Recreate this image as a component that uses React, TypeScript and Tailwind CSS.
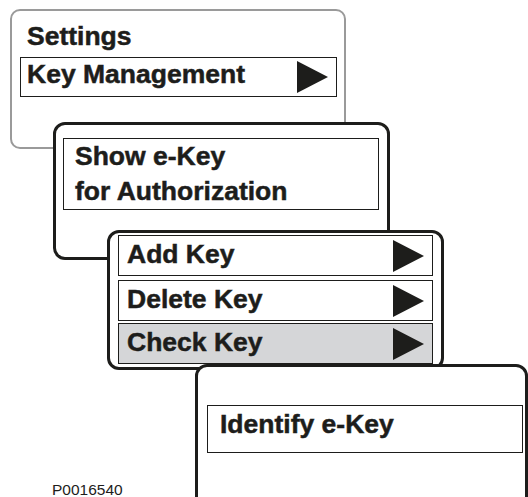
import React from "react";

const Tri = () => (
  <svg width="31" height="32" viewBox="0 0 31 32" className="shrink-0">
    <polygon points="0,0 31,16 0,32" fill="#1d1d1b" />
  </svg>
);

const font = { fontFamily: '"Liberation Sans", Arial, sans-serif' };

const bold = "text-[26.5px] font-bold leading-[30px] [-webkit-text-stroke:0.5px_#1d1d1b]";

function Row({ label, gray }: { label: string; gray?: boolean }) {
  return (
    <div
      className={`flex h-[41px] items-start justify-between border border-[#1d1d1b] pl-[8px] pr-[8px] ${
        gray ? "bg-[#d5d6d8]" : "bg-white"
      }`}
    >
      <span className={`pt-[3px] ${bold}`}>{label}</span>
      <div className="flex h-full items-center">
        <Tri />
      </div>
    </div>
  );
}

export default function App() {
  return (
    <div
      className="relative h-[497px] w-[528px] overflow-hidden bg-white text-[#1d1d1b]"
      style={font}
    >
      {/* Window 1 */}
      <div className="absolute left-[10px] top-[9px] h-[140px] w-[336px] rounded-[10px] border-[2.5px] border-[#9a9a9a] bg-white pl-[8px] pr-[7px] pt-[10px]">
        <div className={`pl-[7px] ${bold}`}>Settings</div>
        <div className="mt-[6px] flex h-[40px] items-start justify-between border border-[#1d1d1b] pl-[6px] pr-[8px]">
          <span className={`pt-[1px] ${bold}`}>Key Management</span>
          <div className="flex h-full items-center">
            <Tri />
          </div>
        </div>
      </div>

      {/* Window 2 */}
      <div className="absolute left-[53px] top-[122px] h-[138px] w-[337px] rounded-[12px] border-[3px] border-[#1d1d1b] bg-white pl-[7px] pr-[8px] pt-[13px]">
        <div className={`border border-[#1d1d1b] pl-[11px] ${bold} leading-[35px]`}>
          <div>Show e-Key</div>
          <div>for Authorization</div>
        </div>
      </div>

      {/* Window 3 */}
      <div className="absolute left-[107px] top-[230px] h-[140px] w-[337px] rounded-[12px] border-[3px] border-[#1d1d1b] bg-white pl-[8px] pr-[8px] pt-[2px]">
        <div className="flex flex-col">
          <Row label="Add Key" />
          <div className="mt-[4px]">
            <Row label="Delete Key" />
          </div>
          <div className="mt-[2px]">
            <Row label="Check Key" gray />
          </div>
        </div>
      </div>

      {/* Window 4 */}
      <div className="absolute left-[195px] top-[364px] h-[160px] w-[333px] rounded-[12px] border-[3px] border-[#1d1d1b] bg-white pl-[9px] pr-[2px] pt-[38px]">
        <div className="h-[48px] border border-[#1d1d1b] pl-[12px] pt-[3px]">
          <span className={bold}>Identify e-Key</span>
        </div>
      </div>

      {/* Caption */}
      <div className="absolute left-[52px] top-[482px] text-[15.5px] leading-[16px] text-[#1d1d1b]">
        P0016540
      </div>
    </div>
  );
}
